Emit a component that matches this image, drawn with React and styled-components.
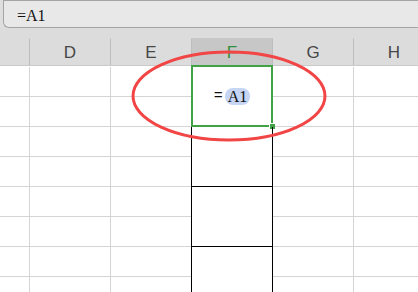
import React from 'react'
import styled, { createGlobalStyle } from 'styled-components'

const GlobalStyle = createGlobalStyle`
  html, body {
    margin: 0;
    padding: 0;
    background: #fff;
  }
`

const COLS = ['C', 'D', 'E', 'F', 'G', 'H']
const TEMPLATE = '30px repeat(5, 81px)'

const Page = styled.div`
  position: relative;
  width: 418px;
  height: 292px;
  overflow: hidden;
  font-family: 'Liberation Sans', Arial, sans-serif;
`

const FormulaBar = styled.div`
  display: flex;
  height: 28px;
  padding-left: 3px;
  background: #dedede;
`

const FormulaBox = styled.div`
  flex: 1;
  display: flex;
  align-items: center;
  box-sizing: border-box;
  height: 28px;
  padding: 3px 0 0 13px;
  background: #e8e8e8;
  border: 1px solid #a4a4a4;
  border-right: none;
  border-radius: 0 0 0 6px;
  font-family: 'Liberation Serif', 'DejaVu Serif', serif;
  font-size: 16px;
  color: #111;
`

const HeaderBand = styled.div`
  display: flex;
  flex-direction: column;
  justify-content: flex-end;
  height: 37px;
  background: #dcdcdc;
  border-bottom: 1px solid #cacaca;
`

const HeaderRow = styled.div`
  display: grid;
  grid-template-columns: ${TEMPLATE};
  height: 27px;
`

const HeaderCell = styled.div`
  display: flex;
  align-items: center;
  justify-content: center;
  box-sizing: border-box;
  padding-top: 2px;
  border-right: 1px solid #bdbdbd;
  background: ${p => (p.$active ? '#c7c7c7' : 'transparent')};
  color: ${p => (p.$active ? '#2f8f3a' : '#474747')};
  font-size: 17px;
  border-top: 1px solid ${p => (p.$active ? '#c7c7c7' : '#dcdcdc')};
`

const Sheet = styled.div`
  display: grid;
  grid-template-columns: ${TEMPLATE};
  grid-auto-rows: 30px;
  padding-top: 1px;
`

const Cell = styled.div`
  box-sizing: border-box;
  border-right: 1px solid #d4d4d4;
  border-bottom: 1px solid #d4d4d4;
`

const MergedCell = styled.div`
  position: relative;
  grid-row: span 2;
  box-sizing: border-box;
  display: flex;
  align-items: center;
  justify-content: center;
  border-right: 1px solid ${p => (p.$boxed ? '#000' : '#d4d4d4')};
  border-bottom: 1px solid ${p => (p.$boxed ? '#000' : '#d4d4d4')};
  box-shadow: ${p => (p.$boxed ? '-1px 0 0 #000' : 'none')};
  font-family: 'Liberation Serif', 'DejaVu Serif', serif;
  font-size: 16px;
  color: #111;
`

const Selection = styled.div`
  position: absolute;
  top: -2px;
  left: -1px;
  right: -1px;
  bottom: -1px;
  border: 2px solid #3fa345;
  pointer-events: none;
`

const FillHandle = styled.div`
  position: absolute;
  right: -4px;
  bottom: -4px;
  width: 5px;
  height: 5px;
  background: #3fa345;
  border-left: 1px solid #fff;
  border-top: 1px solid #fff;
`

const Eq = styled.span`
  margin-right: 2px;
  font-family: 'Liberation Mono', monospace;
  font-size: 15px;
`

const RefPill = styled.span`
  display: inline-flex;
  align-items: center;
  height: 17px;
  padding: 0 3px;
  border-radius: 8px;
  background: #c6d5f3;
`

const Annotation = styled.svg`
  position: absolute;
  left: 131px;
  top: 50px;
  overflow: visible;
`

function SheetBody() {
  const cells = []
  for (let r = 0; r < 8; r++) {
    COLS.forEach(col => {
      if (col === 'F') {
        if (r % 2 === 0) {
          const first = r === 0
          cells.push(
            <MergedCell key={`${col}${r}`} $boxed={!first}>
              {first && (
                <>
                  <Eq>=</Eq>
                  <RefPill>A1</RefPill>
                  <Selection>
                    <FillHandle />
                  </Selection>
                </>
              )}
            </MergedCell>
          )
        }
        return
      }
      cells.push(<Cell key={`${col}${r}`} />)
    })
  }
  return <Sheet>{cells}</Sheet>
}

export default function App() {
  return (
    <Page>
      <GlobalStyle />
      <FormulaBar>
        <FormulaBox>=A1</FormulaBox>
      </FormulaBar>
      <HeaderBand>
        <HeaderRow>
          {COLS.map(col => (
            <HeaderCell key={col} $active={col === 'F'}>
              {col === 'C' ? '' : col}
            </HeaderCell>
          ))}
        </HeaderRow>
      </HeaderBand>
      <SheetBody />
      <Annotation width="196" height="92" viewBox="0 0 196 92">
        <ellipse cx="98" cy="46" rx="96" ry="44" fill="none" stroke="#f24545" strokeWidth="3" />
      </Annotation>
    </Page>
  )
}
